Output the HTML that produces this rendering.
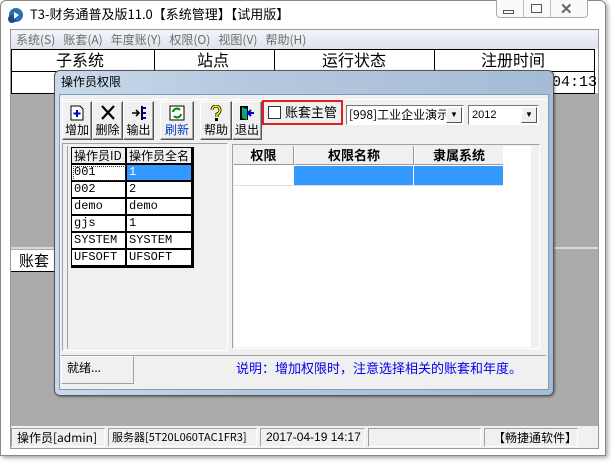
<!DOCTYPE html>
<html><head><meta charset="utf-8"><style>
*{margin:0;padding:0;box-sizing:border-box}
html,body{background:rgb(171,171,171)}
body{width:616px;height:464px;position:relative;overflow:hidden;font-family:"Liberation Sans","Noto Sans CJK SC",sans-serif;font-size:12px;color:#000}
.a{position:absolute}
.w{position:absolute;background:#fff}
.cj{font-family:"Noto Sans CJK SC","WenQuanYi Zen Hei",sans-serif}
.mono{font-family:"Liberation Mono","Noto Sans CJK SC",monospace}
.btn{position:absolute;top:101px;height:39px;background:#f0f0f0;border:1px solid;border-color:#fff #555 #555 #fff;box-shadow:inset -1px -1px #a0a0a0;text-align:center;font-size:12px;line-height:14px}
.btn .t{position:absolute;left:0;right:0;top:21px;color:#000}
.btn svg{position:absolute;left:50%;top:3px;margin-left:-8px}
.cell{position:absolute;height:17px;background:#fff;border:1px solid #000;border-width:0 2px 2px 0;font-size:12px;line-height:15px;padding-left:2px}
.sb{position:absolute;top:428px;height:19px;border:1px solid;border-color:#a0a0a0 #fff #fff #a0a0a0;font-size:12px;line-height:17px;padding-left:5px;white-space:nowrap;overflow:hidden}
</style></head><body>
<!-- white surroundings -->
<div class="w" style="left:0;top:0;width:616px;height:93px"></div>
<div class="w" style="left:0;top:0;width:11px;height:464px"></div>
<div class="w" style="left:598px;top:0;width:18px;height:464px"></div>
<div class="w" style="left:0;top:426px;width:616px;height:38px"></div>
<div class="a" style="left:0;top:0;width:606px;height:456px;border:1px solid #888;border-radius:6px 6px 0 0;box-shadow:2px 2px 4px rgba(0,0,0,.35)"></div>
<svg class="a" style="left:6px;top:6px" width="18" height="18"><circle cx="10" cy="9" r="7" fill="#2c6fb5"/><circle cx="6" cy="13" r="4" fill="#1a4f88"/><path d="M8 6 l5 3 l-5 4z" fill="#fff"/></svg>
<div class="a cj" style="left:30px;top:5px;font-size:13px;line-height:17px">T3-财务通普及版11.0【系统管理】【试用版】</div>
<div class="a" style="left:496px;top:0;width:92px;height:18px;border:1px solid #aaa;border-top:0;border-radius:0 0 4px 4px;background:#fafafa"></div>
<div class="a" style="left:523px;top:0;width:1px;height:18px;background:#bbb"></div>
<div class="a" style="left:550px;top:0;width:1px;height:18px;background:#bbb"></div>
<div class="a" style="left:503px;top:10px;width:11px;height:4px;border:1px solid #555"></div>
<div class="a" style="left:531px;top:4px;width:11px;height:9px;border:1px solid #555"></div>
<div class="a" style="left:560px;top:0px;font-size:15px;color:#666;font-weight:bold">✕</div>
<div class="a" style="left:10px;top:29px;width:589px;height:420px;border:1px solid #999"></div>
<div class="a" style="left:11px;top:30px;width:587px;height:19px;background:linear-gradient(#f3f5f8,#dde3ec)"></div>
<div class="a cj" style="left:16px;top:32px;color:#6d6d6d;font-size:12px;line-height:15px">系统(S)&nbsp;&nbsp;&nbsp;账套(A)&nbsp;&nbsp;&nbsp;年度账(Y)&nbsp;&nbsp;&nbsp;权限(O)&nbsp;&nbsp;&nbsp;视图(V)&nbsp;&nbsp;&nbsp;帮助(H)</div>
<div class="a" style="left:11px;top:49px;width:584px;height:45px;background:#fff;border:1px solid #000"></div>
<div class="a" style="left:11px;top:71px;width:584px;height:1px;background:#000"></div>
<div class="a" style="left:154px;top:49px;width:1px;height:22px;background:#000"></div>
<div class="a" style="left:274px;top:49px;width:1px;height:22px;background:#000"></div>
<div class="a" style="left:434px;top:49px;width:1px;height:22px;background:#000"></div>
<div class="a cj" style="left:56px;top:49px;font-size:16px;line-height:20px">子系统</div>
<div class="a cj" style="left:197px;top:49px;font-size:16px;line-height:20px">站点</div>
<div class="a cj" style="left:322px;top:49px;font-size:16px;line-height:20px">运行状态</div>
<div class="a cj" style="left:481px;top:49px;font-size:16px;line-height:20px">注册时间</div>
<div class="a mono" style="left:552px;top:74px;font-size:15px;line-height:18px">04:13</div>
<div class="a" style="left:11px;top:247px;width:587px;height:2px;background:#d8d8d8"></div>
<div class="a cj" style="left:11px;top:250px;width:46px;height:22px;background:#fff;border-bottom:1px solid #000;font-size:15px;line-height:21px;padding-left:8px">账套</div>
<div class="a" style="left:11px;top:426px;width:587px;height:22px;background:#f0f0f0"></div>
<div class="sb cj" style="left:11px;width:94px">操作员[admin]</div>
<div class="sb cj" style="left:108px;width:149px;font-size:11px;padding-left:3px">服务器[5T20L060TAC1FR3]</div>
<div class="sb" style="left:260px;width:105px">2017-04-19 14:17</div>
<div class="sb" style="left:368px;width:113px"></div>
<div class="sb cj" style="left:484px;width:94px;padding-left:8px">【畅捷通软件】</div>
<div class="a" style="left:54px;top:70px;width:500px;height:326px;border-radius:6px;background:linear-gradient(90deg,#c9d9ea,#b4c8de 40%,#a4bcd6);border:1px solid #555;box-shadow:1px 1px 2px rgba(0,0,0,.4)"></div>
<div class="a cj" style="left:61px;top:74px;font-size:12px;line-height:16px">操作员权限</div>
<div class="a" style="left:59px;top:94px;width:490px;height:296px;background:#f0f0f0;border:1px solid #7f9db9"></div>
<div class="a" style="left:60px;top:99px;width:488px;height:1px;background:#fff"></div>
<div class="btn cj" style="left:62px;width:30px"><svg width="16" height="16"><path d="M2 1h9l3 3v11H2z" fill="#fff" stroke="#000"/><path d="M8 5v7M4.5 8.5h7" stroke="#0000c0" stroke-width="2"/></svg><span class="t">增加</span></div>
<div class="btn cj" style="left:92px;width:31px"><svg width="16" height="16"><path d="M2 1l12 13M14 1L2 14" stroke="#000" stroke-width="2.2"/></svg><span class="t">删除</span></div>
<div class="btn cj" style="left:123px;width:31px"><svg width="16" height="16"><path d="M1 8h7M5 5l3 3-3 3" stroke="#000" stroke-width="1.6" fill="none"/><path d="M11 1v14" stroke="#000" stroke-width="2"/><path d="M11 3h4M11 8h4M11 13h4" stroke="#00c" stroke-width="2"/></svg><span class="t">输出</span></div>
<div class="btn cj" style="left:160px;width:34px"><svg width="16" height="16"><rect x="1" y="1" width="14" height="14" fill="#fff" stroke="#000"/><path d="M4 7a4 4 0 0 1 7-2M12 9a4 4 0 0 1-7 2" stroke="#080" stroke-width="2" fill="none"/></svg><span class="t" style="color:#0040c0">刷新</span></div>
<div class="btn cj" style="left:200px;width:32px"><svg width="16" height="16"><path d="M4 5a4 4 0 1 1 5 4v3" stroke="#000" stroke-width="3" fill="none"/><path d="M4 5a4 4 0 1 1 5 4v3" stroke="#ff0" stroke-width="1.5" fill="none"/><rect x="7" y="13" width="3" height="3" fill="#000"/></svg><span class="t">帮助</span></div>
<div class="btn cj" style="left:232px;width:30px"><svg width="16" height="16"><rect x="1" y="1" width="8" height="14" fill="#000"/><path d="M3 2l5 2v11l-5-2z" fill="#0a7"/><path d="M10 8h5M12 5l-3 3 3 3" stroke="#00c" stroke-width="2" fill="none"/></svg><span class="t">退出</span></div>
<div class="a" style="left:262px;top:100px;width:81px;height:25px;border:2px solid #e02020"></div>
<div class="a" style="left:268px;top:106px;width:13px;height:13px;background:#fff;border:1px solid #333"></div>
<div class="a cj" style="left:285px;top:104px;font-size:13px;line-height:16px">账套主管</div>
<div class="a" style="left:346px;top:105px;width:118px;height:20px;background:#fff;border:1px solid;border-color:#777 #fff #fff #777;overflow:hidden"><span class="cj" style="position:absolute;left:2px;top:1px;font-size:12px;white-space:nowrap;line-height:16px">[998]工业企业演示</span><span style="position:absolute;right:1px;top:1px;width:16px;height:16px;background:#f0f0f0;border:1px solid;border-color:#fff #555 #555 #fff;font-size:8px;text-align:center;line-height:14px">▼</span></div>
<div class="a" style="left:468px;top:105px;width:71px;height:20px;background:#fff;border:1px solid;border-color:#777 #fff #fff #777"><span style="position:absolute;left:3px;top:2px;font-size:11px;line-height:14px">2012</span><span style="position:absolute;right:1px;top:1px;width:16px;height:16px;background:#f0f0f0;border:1px solid;border-color:#fff #555 #555 #fff;font-size:8px;text-align:center;line-height:14px">▼</span></div>
<div class="a" style="left:62px;top:143px;width:166px;height:208px;border:1px solid;border-color:#a0a0a0 #fff #fff #a0a0a0"></div>
<div class="a" style="left:67px;top:146px;width:158px;height:203px;border-left:1px solid #a0a0a0"></div>
<div class="a" style="left:71px;top:147px;width:123px;height:121px;background:#000"></div>
<div class="cell cj" style="left:72px;top:148px;width:55px;background:#f0f0f0;font-size:12px">操作员ID</div>
<div class="cell cj" style="left:127px;top:148px;width:66px;background:#f0f0f0;font-size:12px">操作员全名</div>
<div class="cell mono" style="left:72px;top:165px;width:55px;outline:1px dotted #333;outline-offset:-2px">001</div>
<div class="cell mono" style="left:127px;top:165px;width:66px;background:#3399ff;color:#fff">1</div>
<div class="cell mono" style="left:72px;top:182px;width:55px">002</div><div class="cell mono" style="left:127px;top:182px;width:66px">2</div>
<div class="cell mono" style="left:72px;top:199px;width:55px">demo</div><div class="cell mono" style="left:127px;top:199px;width:66px">demo</div>
<div class="cell mono" style="left:72px;top:216px;width:55px">gjs</div><div class="cell mono" style="left:127px;top:216px;width:66px">1</div>
<div class="cell mono" style="left:72px;top:233px;width:55px">SYSTEM</div><div class="cell mono" style="left:127px;top:233px;width:66px">SYSTEM</div>
<div class="cell mono" style="left:72px;top:250px;width:55px">UFSOFT</div><div class="cell mono" style="left:127px;top:250px;width:66px">UFSOFT</div>
<div class="a" style="left:232px;top:144px;width:308px;height:205px;border:1px solid;border-color:#a0a0a0 #fff #fff #a0a0a0"></div>
<div class="a" style="left:234px;top:146px;width:297px;height:201px;background:#fff"></div>
<div class="a cj" style="left:234px;top:146px;width:59px;height:19px;background:#f0f0f0;border-bottom:1px solid #999;font-weight:bold;font-size:13px;text-align:center;line-height:18px">权限</div>
<div class="a cj" style="left:294px;top:146px;width:119px;height:19px;background:#f0f0f0;border-bottom:1px solid #999;border-left:1px solid #fff;font-weight:bold;font-size:13px;text-align:center;line-height:18px">权限名称</div>
<div class="a cj" style="left:414px;top:146px;width:89px;height:19px;background:#f0f0f0;border-bottom:1px solid #999;border-left:1px solid #fff;font-weight:bold;font-size:13px;text-align:center;line-height:18px">隶属系统</div>
<div class="a" style="left:293px;top:146px;width:1px;height:19px;background:#999"></div>
<div class="a" style="left:413px;top:146px;width:1px;height:19px;background:#999"></div>
<div class="a" style="left:294px;top:166px;width:119px;height:19px;background:#3399ff"></div>
<div class="a" style="left:414px;top:166px;width:89px;height:19px;background:#3399ff"></div>
<div class="a" style="left:234px;top:185px;width:269px;height:1px;background:#ddd"></div>
<div class="a" style="left:61px;top:355px;width:485px;height:1px;background:#a0a0a0"></div>
<div class="a" style="left:61px;top:356px;width:73px;height:28px;border:1px solid;border-color:#fff #a0a0a0 #a0a0a0 #fff"></div>
<div class="a cj" style="left:67px;top:361px;font-size:12px;line-height:14px">就绪...</div>
<div class="a cj" style="left:236px;top:360px;color:#0000ee;font-size:13px;line-height:16px">说明：增加权限时，注意选择相关的账套和年度。</div>
</body></html>
